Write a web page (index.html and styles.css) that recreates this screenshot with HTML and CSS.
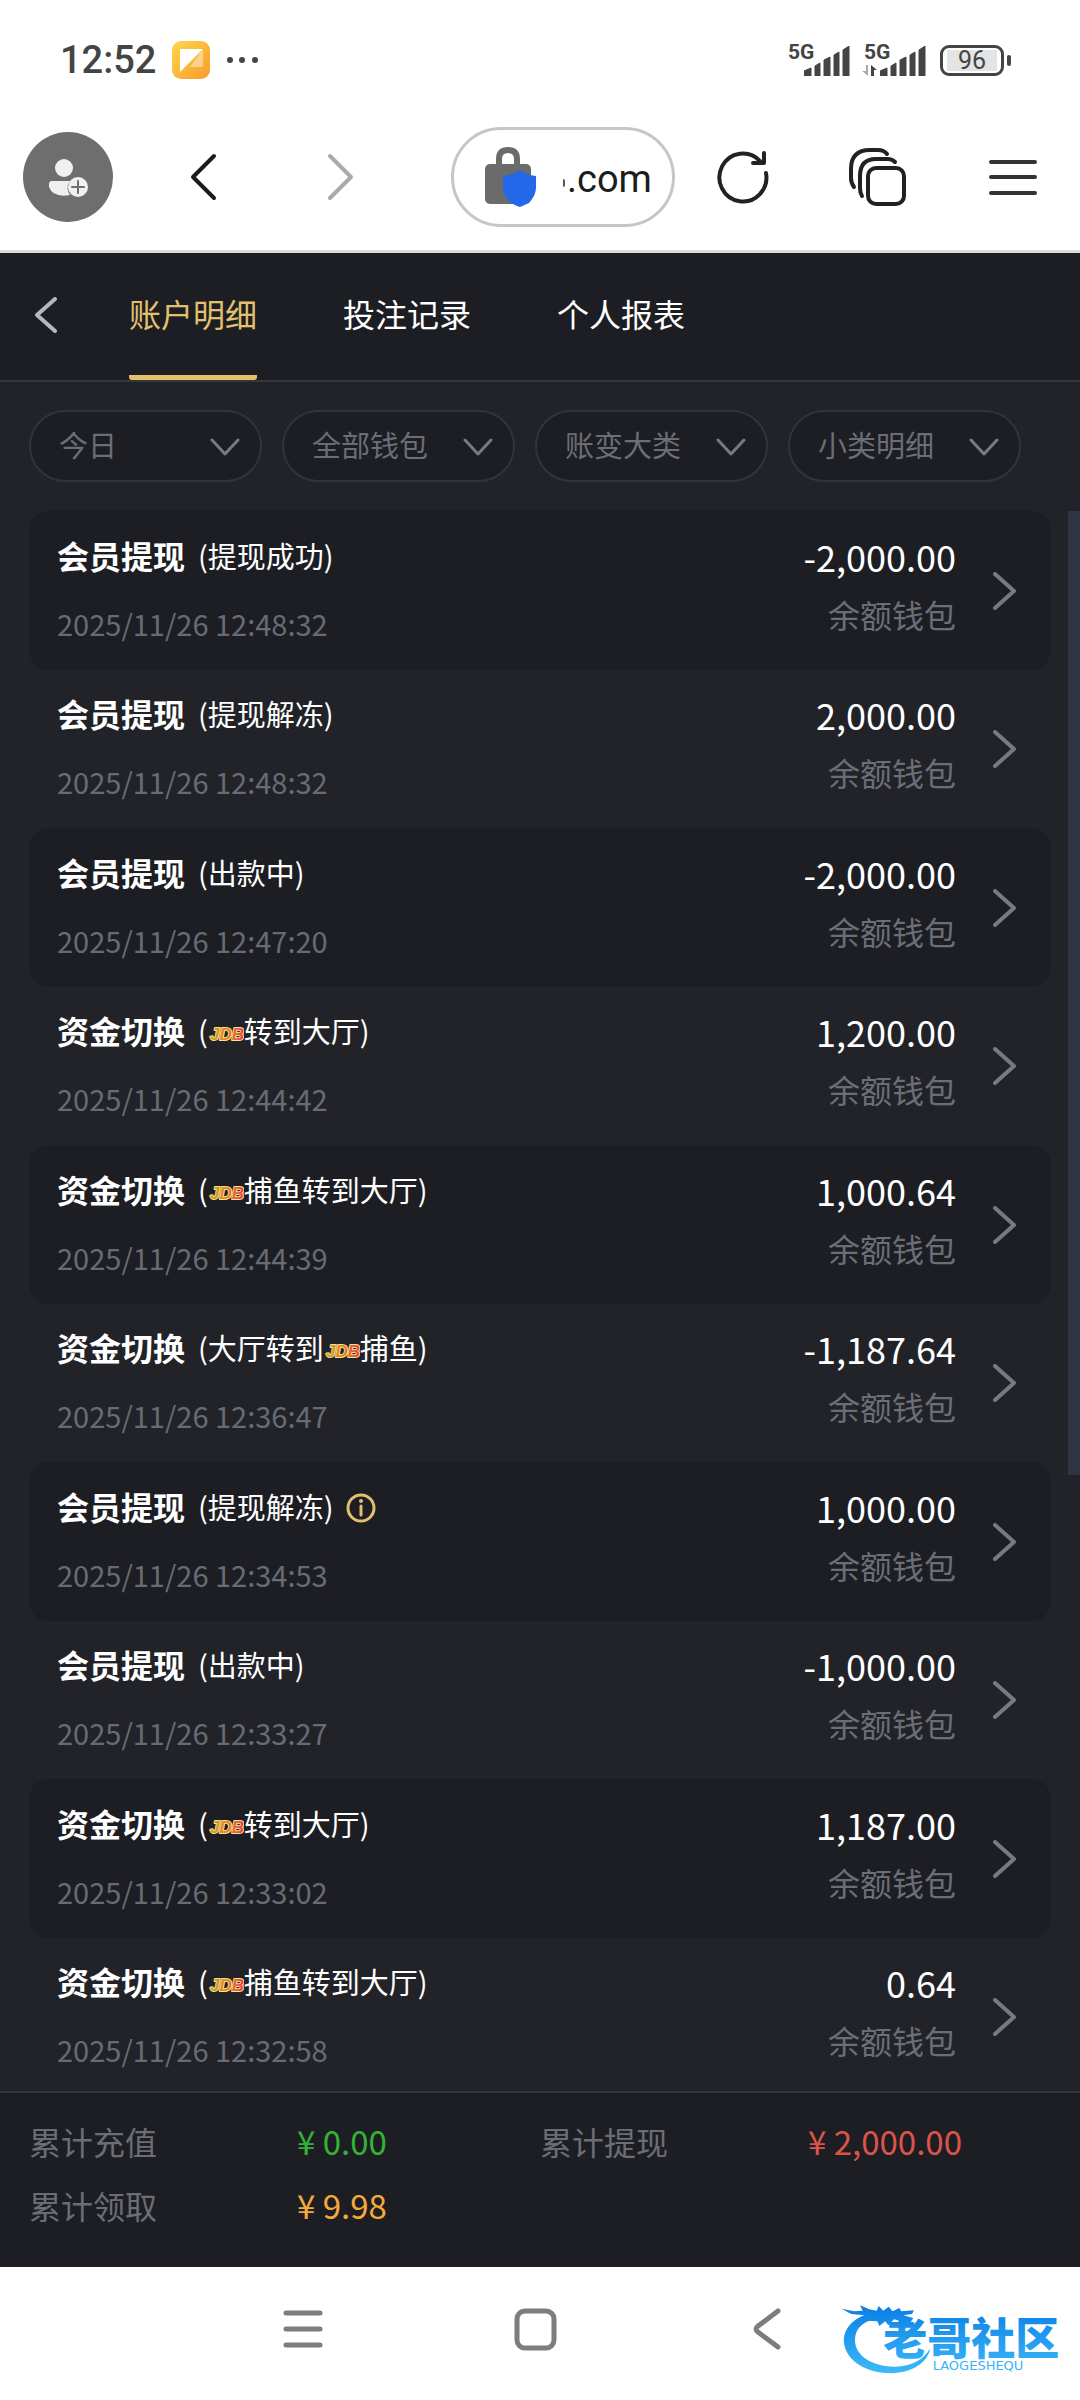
FILE: index.html
```html
<!doctype html>
<html lang="zh-CN">
<head>
<meta charset="UTF-8">
<meta name="viewport" content="width=device-width,initial-scale=1">
<title>账户明细</title>
<link rel="stylesheet" href="styles.css">
</head>
<body>
<!-- 公用图标 -->
<svg class="sprite" aria-hidden="true">
	<defs>
		<linearGradient id="jdbFill" x1="0" y1="0" x2="1" y2="0">
			<stop offset="0" stop-color="#c9a227"/>
			<stop offset="0.5" stop-color="#e8842a"/>
			<stop offset="1" stop-color="#e2404f"/>
		</linearGradient>
		<linearGradient id="noteFill" x1="0" y1="0" x2="1" y2="1">
			<stop offset="0" stop-color="#fbd84a"/>
			<stop offset="1" stop-color="#fa9a2c"/>
		</linearGradient>
		<linearGradient id="markFill" gradientUnits="userSpaceOnUse" x1="0" y1="80" x2="0" y2="280">
			<stop offset="0" stop-color="#0b7fe6"/>
			<stop offset="1" stop-color="#3dbaf8"/>
		</linearGradient>
	</defs>
	<symbol id="arrow" viewBox="0 0 24 38">
		<path d="M2 2 L21 19 L2 36" fill="none" stroke="currentColor" stroke-width="4" stroke-linecap="round" stroke-linejoin="round"/>
	</symbol>
	<symbol id="down" viewBox="0 0 30 18">
		<path d="M2 2 L15 16 L28 2" fill="none" stroke="currentColor" stroke-width="3" stroke-linecap="round" stroke-linejoin="round"/>
	</symbol>
	<symbol id="bars" viewBox="0 0 46 30">
		<path d="M0 30 V25 L7 22 V30 Z M11 30 V20 L16 17 V30 Z M20 30 V14 L26 11 V30 Z M30 30 V9 L35 6 V30 Z M39 30 V4 L45 0 V30 Z" fill="#444" stroke="#444" stroke-width="1" stroke-linejoin="round"/>
	</symbol>
</svg>

<div class="wrap">
	<div class="status">
		<span class="clock">12:52</span>
		<svg class="note" viewBox="0 0 38 38">
			<rect width="38" height="38" rx="9" fill="url(#noteFill)"/>
			<path d="M18 26 L31 8 V24 Q31 26 29 26 Z" fill="#fdd28d"/>
			<path d="M8 8 H31 L8 31 Z" fill="#fff"/>
		</svg>
		<svg class="dots" viewBox="0 0 32 8"><circle cx="4" cy="4" r="3"/><circle cx="16" cy="4" r="3"/><circle cx="29" cy="4" r="3"/></svg>

		<div class="signal">
			<span class="net">5G</span>
			<svg class="bars"><use href="#bars"/></svg>
		</div>
		<div class="signal">
			<span class="net">5G</span>
			<svg class="updown" viewBox="0 0 16 11"><path d="M6 0 V11 L0 6 H4 V0 Z" fill="#aaa"/><path d="M9 11 V0 L15 5 H12 V11 Z" fill="#444"/></svg>
			<svg class="bars"><use href="#bars"/></svg>
		</div>
		<div class="battery"><span>96</span></div>
	</div>

	<div class="browser">
		<button type="button" class="user" aria-label="用户">
			<svg viewBox="0 0 90 90" width="90" height="90">
				<circle cx="41" cy="36" r="9" fill="#f0f0f0"/>
				<path d="M26 52 Q26 49 29 49 H47 Q42 56 47 63 Q30 66 26 55 Z" fill="#f0f0f0"/>
				<circle cx="55" cy="55" r="10" fill="#f0f0f0"/>
				<path d="M55 49 V61 M49 55 H61" stroke="#6e6e6e" stroke-width="2"/>
			</svg>
		</button>
		<button type="button" aria-label="后退"><svg class="big" viewBox="0 0 48 48"><path d="M35 3 L14 24 L35 45" stroke="#1c1c1c"/></svg></button>
		<button type="button" aria-label="前进"><svg class="big" viewBox="0 0 48 48"><path d="M16 3 L37 24 L16 45" stroke="#aaa"/></svg></button>
		<div class="address">
			<svg width="54" height="62" viewBox="0 0 54 62">
				<path d="M15 22 V13 Q15 4 24 4 Q33 4 33 13 V22" fill="none" stroke="#6b6b6b" stroke-width="6"/>
				<rect x="1" y="18" width="46" height="40" rx="5" fill="#6b6b6b"/>
				<path d="M36 24 Q42 29 52 30 V42 Q51 56 36 61 Q20 56 19 42 V30 Q29 29 36 24 Z" fill="#2468ea"/>
			</svg>
			<input type="text" value=".com" aria-label="网址">
		</div>
		<button type="button" aria-label="刷新"><svg width="56" height="56" viewBox="0 0 56 56"><path d="M51 24 A23.500 24 0 1 1 45 12 M49 4 V14 H38" stroke="#222"/></svg></button>
		<button type="button" aria-label="标签页"><svg width="60" height="60" viewBox="0 0 60 60"><rect x="20" y="21" width="36" height="36" rx="8" stroke="#222"/><path d="M14 49 Q12 46 12 41 V29 Q12 12 28 12 H40 Q44 12 47 15 M6 40 Q3 36 3 31 V22 Q3 3 22 3 H30 Q36 3 39 7" stroke="#222"/></svg></button>
		<button type="button" aria-label="菜单"><svg class="big" viewBox="0 0 48 48"><path d="M2 9 H46 M2 24 H46 M2 40 H46" stroke="#333"/></svg></button>
	</div>

	<header class="tabs">
		<button type="button" class="back" aria-label="返回"><svg viewBox="0 0 24 36"><path d="M21 2 L3 18 L21 34" fill="none" stroke="#b5b7c0" stroke-width="4" stroke-linecap="round" stroke-linejoin="round"/></svg></button>
		<nav>
			<a href="#" class="on">账户明细</a>
			<a href="#">投注记录</a>
			<a href="#">个人报表</a>
		</nav>
	</header>

	<div class="filters">
		<div class="filter">
			<select aria-label="日期"><option>今日</option></select>
			<svg><use href="#down"/></svg>
		</div>
		<div class="filter">
			<select aria-label="钱包"><option>全部钱包</option></select>
			<svg><use href="#down"/></svg>
		</div>
		<div class="filter">
			<select aria-label="大类"><option>账变大类</option></select>
			<svg><use href="#down"/></svg>
		</div>
		<div class="filter">
			<select aria-label="小类"><option>小类明细</option></select>
			<svg><use href="#down"/></svg>
		</div>
	</div>

	<div class="content">
		<ul class="records">
			<li><a href="#">
				<div class="info">
					<p class="title"><strong>会员提现</strong><span>(提现成功)</span></p>
					<time>2025/11/26 12:48:32</time>
				</div>
				<div class="sum"><em>-2,000.00</em><span>余额钱包</span></div>
				<svg class="arrow"><use href="#arrow"/></svg>
			</a></li>
			<li><a href="#">
				<div class="info">
					<p class="title"><strong>会员提现</strong><span>(提现解冻)</span></p>
					<time>2025/11/26 12:48:32</time>
				</div>
				<div class="sum"><em>2,000.00</em><span>余额钱包</span></div>
				<svg class="arrow"><use href="#arrow"/></svg>
			</a></li>
			<li><a href="#">
				<div class="info">
					<p class="title"><strong>会员提现</strong><span>(出款中)</span></p>
					<time>2025/11/26 12:47:20</time>
				</div>
				<div class="sum"><em>-2,000.00</em><span>余额钱包</span></div>
				<svg class="arrow"><use href="#arrow"/></svg>
			</a></li>
			<li><a href="#">
				<div class="info">
					<p class="title"><strong>资金切换</strong><span>(<svg class="jdb" viewBox="0 0 36 22"><text x="2" y="18">JDB</text></svg>转到大厅)</span></p>
					<time>2025/11/26 12:44:42</time>
				</div>
				<div class="sum"><em>1,200.00</em><span>余额钱包</span></div>
				<svg class="arrow"><use href="#arrow"/></svg>
			</a></li>
			<li><a href="#">
				<div class="info">
					<p class="title"><strong>资金切换</strong><span>(<svg class="jdb" viewBox="0 0 36 22"><text x="2" y="18">JDB</text></svg>捕鱼转到大厅)</span></p>
					<time>2025/11/26 12:44:39</time>
				</div>
				<div class="sum"><em>1,000.64</em><span>余额钱包</span></div>
				<svg class="arrow"><use href="#arrow"/></svg>
			</a></li>
			<li><a href="#">
				<div class="info">
					<p class="title"><strong>资金切换</strong><span>(大厅转到<svg class="jdb" viewBox="0 0 36 22"><text x="2" y="18">JDB</text></svg>捕鱼)</span></p>
					<time>2025/11/26 12:36:47</time>
				</div>
				<div class="sum"><em>-1,187.64</em><span>余额钱包</span></div>
				<svg class="arrow"><use href="#arrow"/></svg>
			</a></li>
			<li><a href="#">
				<div class="info">
					<p class="title"><strong>会员提现</strong><span>(提现解冻)</span>
						<svg class="tip" viewBox="0 0 30 30"><circle cx="15" cy="15" r="13" fill="none" stroke="#e3c06d" stroke-width="3"/><path d="M15 13 V22" stroke="#e3c06d" stroke-width="3" stroke-linecap="round"/><circle cx="15" cy="8" r="2" fill="#e3c06d"/></svg>
					</p>
					<time>2025/11/26 12:34:53</time>
				</div>
				<div class="sum"><em>1,000.00</em><span>余额钱包</span></div>
				<svg class="arrow"><use href="#arrow"/></svg>
			</a></li>
			<li><a href="#">
				<div class="info">
					<p class="title"><strong>会员提现</strong><span>(出款中)</span></p>
					<time>2025/11/26 12:33:27</time>
				</div>
				<div class="sum"><em>-1,000.00</em><span>余额钱包</span></div>
				<svg class="arrow"><use href="#arrow"/></svg>
			</a></li>
			<li><a href="#">
				<div class="info">
					<p class="title"><strong>资金切换</strong><span>(<svg class="jdb" viewBox="0 0 36 22"><text x="2" y="18">JDB</text></svg>转到大厅)</span></p>
					<time>2025/11/26 12:33:02</time>
				</div>
				<div class="sum"><em>1,187.00</em><span>余额钱包</span></div>
				<svg class="arrow"><use href="#arrow"/></svg>
			</a></li>
			<li><a href="#">
				<div class="info">
					<p class="title"><strong>资金切换</strong><span>(<svg class="jdb" viewBox="0 0 36 22"><text x="2" y="18">JDB</text></svg>捕鱼转到大厅)</span></p>
					<time>2025/11/26 12:32:58</time>
				</div>
				<div class="sum"><em>0.64</em><span>余额钱包</span></div>
				<svg class="arrow"><use href="#arrow"/></svg>
			</a></li>
		</ul>
		<div class="scrollbar"></div>
	</div>

	<dl class="total">
		<div><dt>累计充值</dt><dd class="green">¥ 0.00</dd></div>
		<div><dt>累计提现</dt><dd class="red">¥ 2,000.00</dd></div>
		<div><dt>累计领取</dt><dd class="orange">¥ 9.98</dd></div>
	</dl>

	<div class="system">
		<button type="button" aria-label="最近任务"><svg viewBox="0 0 44 44"><path d="M5 6 H39 M5 22 H39 M5 38 H39"/></svg></button>
		<button type="button" aria-label="主页"><svg viewBox="0 0 44 44"><rect x="4" y="4" width="37" height="37" rx="8"/></svg></button>
		<button type="button" aria-label="返回"><svg viewBox="0 0 44 44"><path d="M33 4 L13 19 Q9 22 13 25 L33 40"/></svg></button>
		<svg class="mark" viewBox="60 60 672 240">
			<g fill="url(#markFill)">
				<path d="M150 100 C95 115 68 150 72 190 C80 245 140 280 215 280 C275 278 322 250 331 205 C310 240 275 260 225 260 C160 260 105 230 105 180 C105 150 125 125 165 118 Z"/>
				<path d="M64 86 L102 94 L128 92 L120 76 L148 88 L170 92 L176 78 L190 92 L206 80 L218 94 L238 84 L244 94 L282 91 L276 102 L250 106 L280 114 L270 130 L240 122 L222 118 L205 136 L196 124 L178 138 L172 124 L140 122 L134 106 L94 102 Z"/>
				<text x="190" y="224" font-size="132" font-weight="900">老哥社区</text>
				<text x="338" y="270" font-size="39" class="latin">LAOGESHEQU</text>
			</g>
		</svg>
	</div>
</div>
</body>
</html>
```
FILE: styles.css
```css
* {
	box-sizing: border-box;
}
body {
	margin: 0;
	font-family: "Noto Sans CJK SC", sans-serif;
	background: #222328;
}
p, ul, dl, dd {
	margin: 0;
	padding: 0;
}
ul {
	list-style: none;
}
a {
	color: inherit;
	text-decoration: none;
}
button {
	padding: 0;
	border: 0;
	background: none;
}
svg {
	display: block;
	flex: none;
}
.sprite {
	position: absolute;
	width: 0;
	height: 0;
}
.wrap {
	display: flex;
	flex-direction: column;
	height: 100vh;
}

/* 状态栏 */
.status {
	display: flex;
	align-items: center;
	height: 102px;
	padding: 18px 76px 0 60px;
	background: #fff;
	color: #444;
	font-family: Roboto, sans-serif;
}
.clock {
	font-size: 38px;
	font-weight: 500;
}
.note {
	width: 38px;
	height: 38px;
	margin-left: 16px;
}
.dots {
	width: 32px;
	height: 8px;
	margin: 0 auto 0 16px;
	fill: #444;
}
.signal {
	display: flex;
	position: relative;
	justify-content: flex-end;
	align-items: flex-end;
	width: 62px;
	height: 32px;
	margin-right: 14px;
}
.net {
	position: absolute;
	left: 0;
	top: -2px;
	font-size: 21px;
	line-height: 21px;
	font-weight: 700;
}
.bars {
	width: 46px;
	height: 30px;
}
.updown {
	width: 16px;
	height: 11px;
	margin-right: 2px;
}
.battery {
	position: relative;
	width: 64px;
	height: 31px;
	padding: 2px 4px;
	border: 3px solid #444;
	border-radius: 9px;
}
.battery span {
	display: block;
	background: #e4e4e4;
	font-size: 25px;
	line-height: 21px;
	text-align: center;
}
.battery:after {
	content: '';
	position: absolute;
	right: -10px;
	top: 7px;
	width: 4px;
	height: 11px;
	border-radius: 2px;
	background: #444;
}

/* 浏览器工具栏 */
.browser {
	display: grid;
	grid-template-columns: repeat(8, 1fr);
	align-items: center;
	justify-items: center;
	height: 151px;
	padding-top: 2px;
	border-bottom: 3px solid #ddd;
	background: #fff;
}
.browser path, .browser rect {
	stroke-linecap: round;
	stroke-linejoin: round;
}
.browser button:not(.user) svg {
	fill: none;
	stroke-width: 4;
}
.big {
	width: 48px;
	height: 48px;
}
.user {
	border-radius: 50%;
	background: #6e6e6e;
}
.address {
	display: flex;
	grid-column: 4 / 6;
	justify-self: end;
	align-items: center;
	width: 224px;
	height: 100px;
	padding-left: 30px;
	border: 3px solid #c6c6c6;
	border-radius: 50px;
}
.address:after {
	content: '';
	order: 1;
	width: 2px;
	height: 8px;
	margin: 12px 0 0 25px;
	border-radius: 0 2px 2px 0;
	background: #555;
}
.address input {
	order: 2;
	width: 100px;
	min-width: 0;
	padding: 4px 0 0 2px;
	border: 0;
	background: none;
	color: #1c1c1c;
	font: 38px Roboto, sans-serif;
}

/* 标签 */
.tabs {
	display: flex;
	flex: none;
	height: 129px;
	padding-left: 34px;
	border-bottom: 2px solid #34363d;
	background: #1d1e23;
	color: #fff;
}
.back {
	height: 124px;
}
.back svg {
	width: 24px;
	height: 36px;
}
.tabs nav {
	display: flex;
	gap: 86px;
	margin-left: 71px;
}
.tabs a {
	padding-bottom: 2px;
	font-size: 32px;
	line-height: 120px;
}
.tabs .on {
	border-bottom: 5px solid #e3c06d;
	border-radius: 3px;
	color: #e3c06d;
}

/* 筛选 */
.filters {
	display: grid;
	flex: none;
	grid-template-columns: repeat(4, 1fr);
	gap: 20px;
	padding: 28px 59px 29px 29px;
}
.filter {
	position: relative;
}
.filter select {
	display: block;
	width: 100%;
	height: 72px;
	padding: 0 0 4px 28px;
	border: 2px solid #32343b;
	border-radius: 36px;
	appearance: none;
	background: #1d1e23;
	color: #6b6e77;
	font: 29px "Noto Sans CJK SC", sans-serif;
}
.filter svg {
	position: absolute;
	right: 22px;
	top: 28px;
	width: 30px;
	height: 18px;
	color: #777a82;
	pointer-events: none;
}

/* 记录列表 */
.content {
	position: relative;
	flex: 1;
	min-height: 0;
	overflow: hidden;
}
.records {
	padding: 0 29px;
}
.records a {
	display: flex;
	align-items: center;
	height: 158px;
	padding: 0 34px 0 28px;
	border-radius: 20px;
}
.records li:nth-child(odd) a {
	height: 159px;
	background: #1d1e23;
}
.info {
	flex: 1;
	padding-bottom: 4px;
}
.title {
	display: flex;
	align-items: center;
	height: 48px;
	margin-bottom: 20px;
	color: #fff;
}
.title strong {
	margin-right: 13px;
	font-size: 32px;
}
.title span {
	display: flex;
	align-items: center;
	font-size: 29px;
}
.jdb {
	width: 36px;
	height: 22px;
	margin-top: 6px;
}
.jdb text {
	fill: url(#jdbFill);
	stroke: #ffe08a;
	stroke-width: 2px;
	stroke-linejoin: round;
	paint-order: stroke;
	font: italic bold 17px "Liberation Sans", sans-serif;
}
.tip {
	width: 30px;
	height: 30px;
	margin: 4px 0 0 12px;
}
.info time {
	display: block;
	color: #686b74;
	font-size: 29px;
	line-height: 48px;
}
.sum {
	padding-bottom: 12px;
	text-align: right;
}
.sum em, .sum span {
	display: block;
	line-height: 58px;
}
.sum em {
	color: #fff;
	font-size: 36px;
	font-style: normal;
}
.sum span {
	color: #6b6e77;
	font-size: 32px;
}
.arrow {
	width: 24px;
	height: 38px;
	margin-left: 37px;
	color: #777a82;
}
.scrollbar {
	position: absolute;
	top: 0;
	right: 0;
	width: 12px;
	height: 61%;
	background: #2e3541;
}

/* 合计 */
.total {
	display: grid;
	flex: none;
	grid-template-columns: 1fr 1fr;
	padding: 16px 29px 30px;
	border-top: 2px solid #34363d;
	background: #1d1e23;
}
.total div {
	display: flex;
	height: 64px;
	font-size: 32px;
	line-height: 64px;
}
.total dt {
	width: 268px;
	color: #6b6e77;
}
.total dd {
	font-size: 33px;
}
.green {
	color: #35b135;
}
.red {
	color: #dc5349;
}
.orange {
	color: #f5a93b;
}

/* 系统导航 */
.system {
	display: flex;
	position: relative;
	flex: none;
	align-items: center;
	justify-content: center;
	gap: 188px;
	height: 133px;
	padding: 0 10px 9px 0;
	background: #fff;
}
.system button svg {
	width: 44px;
	height: 44px;
	fill: none;
	stroke: #7d7d7d;
	stroke-width: 5;
	stroke-linecap: round;
}
.mark {
	position: absolute;
	right: 16px;
	top: 33px;
	width: 224px;
	height: 80px;
}
.latin {
	font-family: "DejaVu Sans", sans-serif;
}
```
